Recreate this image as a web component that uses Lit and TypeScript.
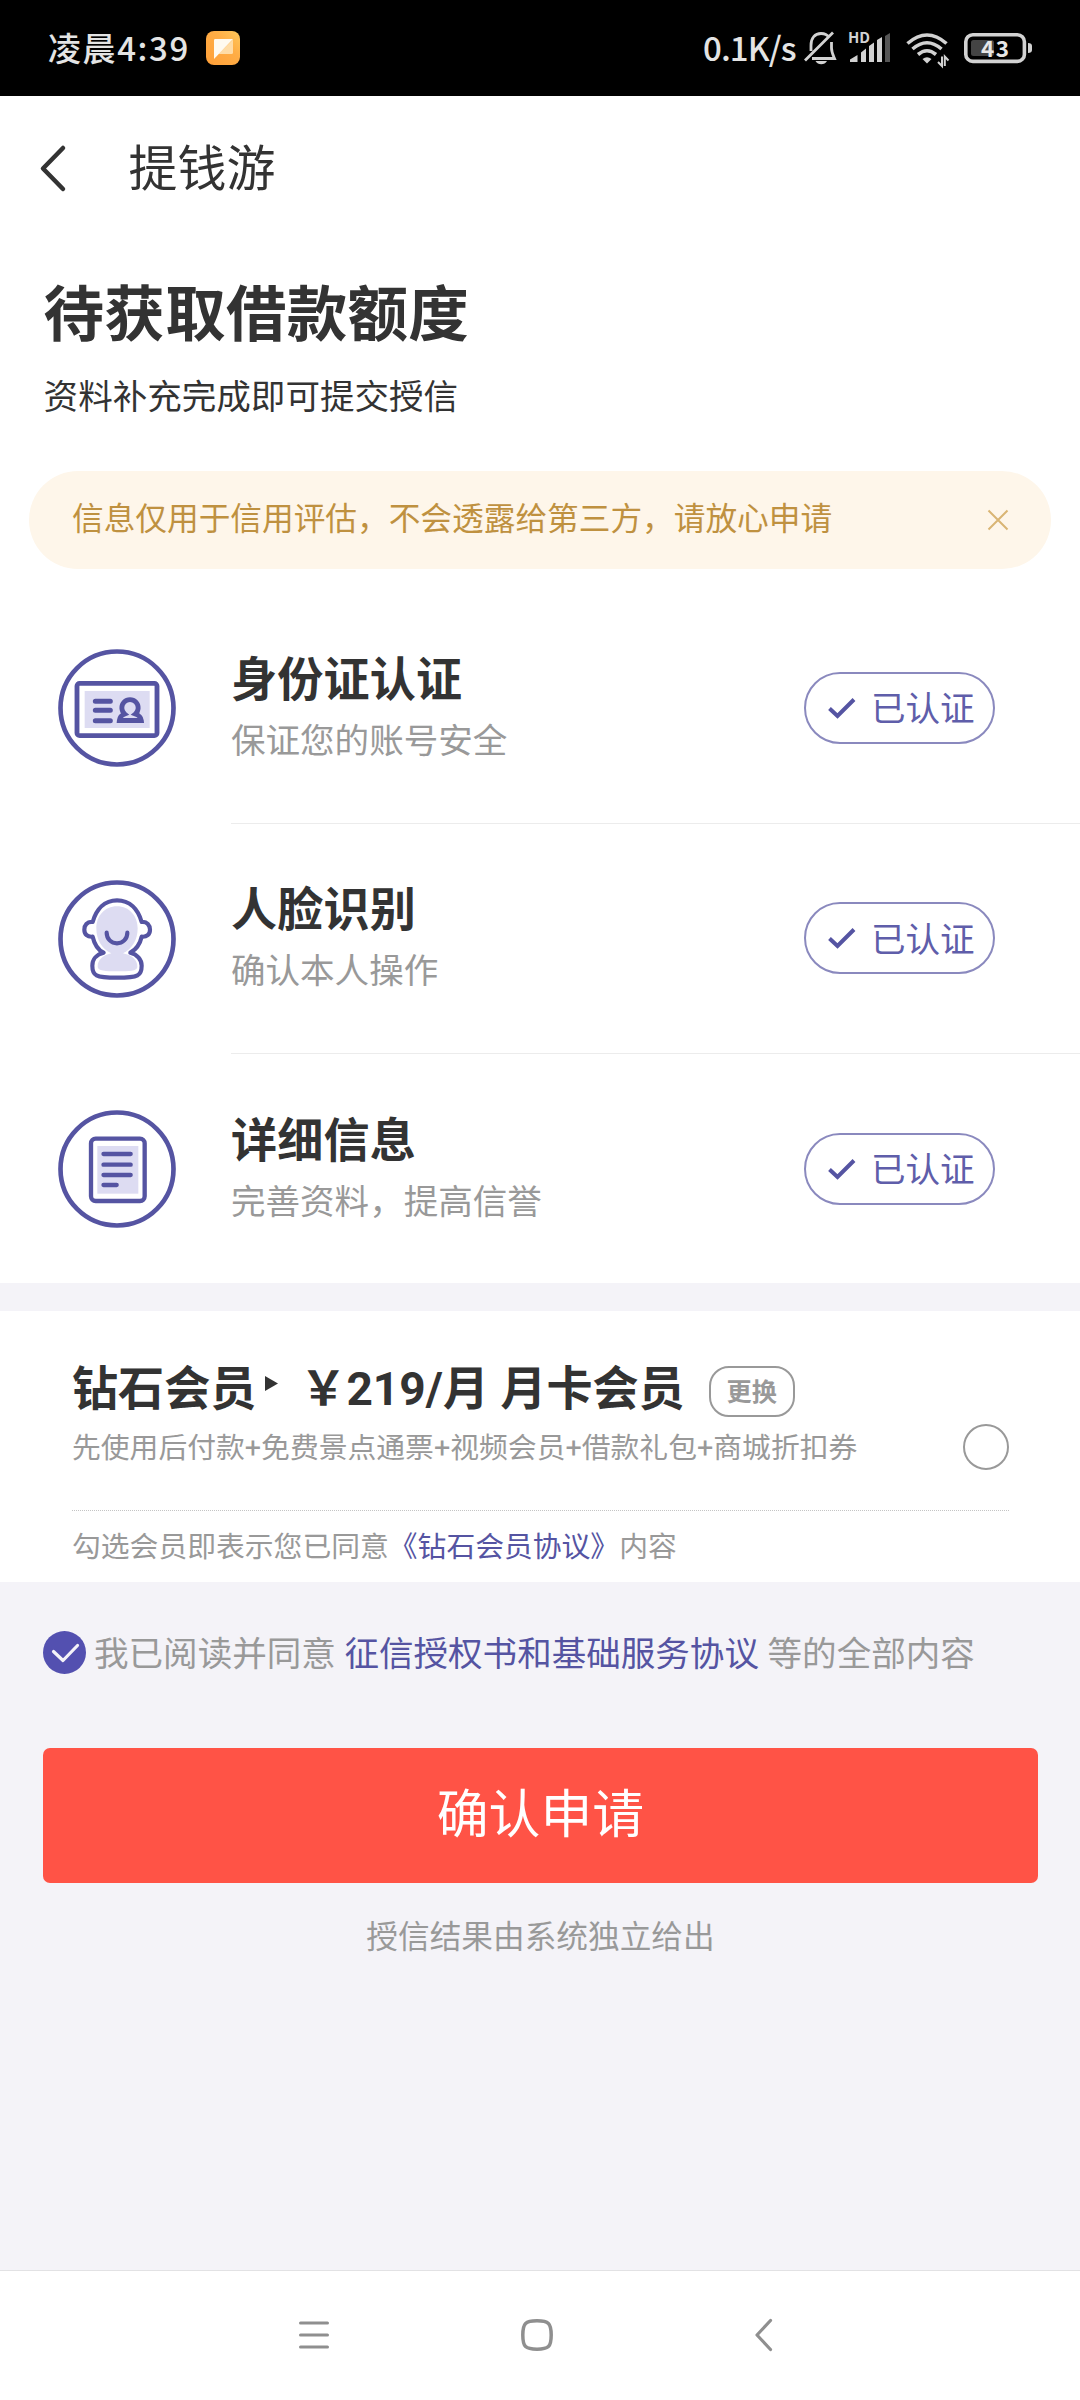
import { LitElement, html, css, svg, TemplateResult } from "lit";
import { customElement, property, state } from "lit/decorators.js";

const CARD_ICON = svg`
  <rect x="57" y="103" width="240" height="157" rx="8" stroke-width="14.5"/>
  <rect class="tint" x="80" y="126" width="195" height="111"/>
  <path stroke-width="15" stroke-linecap="round" d="M112 157H157M112 184H157M112 215H157"/>
  <path class="tint outline" stroke-width="14.5" d="M200 195A24.500 24.500 0 1 1 232 195C243 199 249 205 250 214.500H184C185 205 190 199 200 195Z"/>`;

const FACE_ICON = svg`
  <path class="tint" d="M177 79C214 79 239 108 239 145C239 180 222 207 195 220C225 226 238 242 238 260C238 273 214 274 177 274C142 274 119 272 119 260C119 242 132 226 160 220C132 207 115 180 115 145C115 108 140 79 177 79Z"/>
  <path stroke-width="12.500" stroke-linejoin="round" d="M104 126C87 124 79 136 79 149C79 163 89 172 104 170C109 192 122 211 137 218C115 223 103 239 103 257C103 286 112 293 177 293C242 293 251 286 251 257C251 239 238 223 217 218C233 209 246 192 251 170C266 172 276 163 276 149C276 136 267 124 251 126C240 87 215 61 177 61C140 61 115 87 104 126Z"/>
  <path stroke-width="12.500" stroke-linecap="round" d="M146 158C146 177 160 190 177 190C194 190 208 177 208 158"/>`;

const NOTE_ICON = svg`
  <rect x="99" y="86" width="161" height="187" rx="14" stroke-width="13"/>
  <rect class="tint" x="118" y="108" width="123" height="143"/>
  <path stroke-width="13" stroke-linecap="round" d="M136.500 132H218M136.500 164H218M136.500 195H218M136.500 225H176"/>`;

interface Step {
  icon: TemplateResult;
  title: string;
  note: string;
}

const STEPS: Step[] = [
  { icon: CARD_ICON, title: "身份证认证", note: "保证您的账号安全" },
  { icon: FACE_ICON, title: "人脸识别", note: "确认本人操作" },
  { icon: NOTE_ICON, title: "详细信息", note: "完善资料，提高信誉" },
];

@customElement("status-bar")
class StatusBar extends LitElement {
  static styles = css`
    :host {
      display: flex;
      align-items: center;
      height: 96px;
      box-sizing: border-box;
      padding: 0 47px 0 48px;
      background: #000;
      color: #e4e4e4;
      font: 500 33px/48px "Noto Sans CJK SC", sans-serif;
    }
    svg { display: block; flex: none; }
    .clock { letter-spacing: 1.6px; width: 158px; white-space: nowrap; padding-bottom: 2px; }
    .speed { margin-left: auto; letter-spacing: -0.9px; width: 101px; white-space: nowrap; padding-bottom: 3px; }
  `;
  render() {
    return html`
      <span class="clock">凌晨4:39</span>
      <svg width="34" height="34" viewBox="0 0 34 34">
        <defs>
          <linearGradient id="g" x1="0" y1="1" x2="1" y2="0">
            <stop offset="0" stop-color="#ff9f38"/><stop offset=".6" stop-color="#ffad45"/><stop offset="1" stop-color="#ffc95c"/>
          </linearGradient>
        </defs>
        <rect width="34" height="34" rx="8" fill="url(#g)"/>
        <path d="M27 8.500V21.500a1.500 1.500 0 0 1-1.500 1.500H12.500Z" fill="#ffdca6"/>
        <path d="M8 9.200Q8 8 9.200 8H27L8 28Z" fill="#fffaf0"/>
      </svg>
      <span class="speed">0.1K/s</span>
      <svg width="229" height="64" viewBox="804 16 229 64" fill="none" stroke="#d2d2d2">
        <path stroke-width="2.800" d="M811 51V45.500C811 38 815 33.500 821 33.500C824.500 33.500 827.500 35 829 37.500M831.500 42V48C831.500 52 833 55 834.500 58.500H812M805 60.500L833 32.500"/>
        <path stroke="none" fill="#d2d2d2" d="M815.500 61H827Q825 64.200 821.200 64.200Q817.500 64.200 815.500 61Z"/>
        <g stroke="none" fill="#d2d2d2">
          <text x="848" y="43" font-size="15" font-weight="700" font-family="Noto Sans CJK SC, sans-serif">HD</text>
          <path d="M850 62V59.500L857.500 55V62ZM861 62V52.500L866 48.500V62ZM869 62V46L874 42.500V62ZM877 62V40L882 37V62Z"/>
          <path fill="#555" d="M885 62V36L890 33V62Z"/>
        </g>
        <path stroke-width="3.600" d="M907.500 43.500Q927 26.500 946.500 43.500M912.500 49Q927 36.500 941.500 49M918 54.500Q927 47 936 54.500"/>
        <path stroke="none" fill="#d2d2d2" d="M922.500 59Q927 55.500 931.500 59L927 63.500Z"/>
        <path stroke-width="2" d="M942 56.500V66L938 62M944.800 66V56.500L948.500 60.500"/>
        <rect x="965.800" y="34.800" width="58.600" height="26.600" rx="7" stroke-width="3.600"/>
        <rect x="971" y="40" width="23" height="16" rx="2.500" fill="#444" stroke="none"/>
        <path stroke="none" fill="#d2d2d2" d="M1028 43Q1032 43 1032 46V50Q1032 53 1028 53Z"/>
        <text x="981" y="56.500" stroke="none" fill="#e6e6e6" font-size="22.500" font-weight="700" letter-spacing="1.500" font-family="Noto Sans CJK SC, sans-serif">43</text>
      </svg>`;
  }
}

@customElement("step-row")
class StepRow extends LitElement {
  @property({ attribute: false }) step!: Step;
  static styles = css`
    :host { display: flex; height: 230.4px; padding-left: 57.6px; }
    .icon { flex: none; align-self: center; width: 118px; height: 118px; margin-right: 55.4px; fill: none; stroke: #5554a2; }
    .tint { fill: #dddcf2; stroke: none; }
    .outline { stroke: #5554a2; }
    .body {
      flex: 1; display: flex; align-items: center; justify-content: space-between;
      padding-right: 85px; box-sizing: border-box; border-bottom: 1px solid #ececec;
    }
    :host([last]) .body { border-bottom-color: transparent; }
    .words { display: flex; flex-direction: column; padding-top: 3px; }
    .title { font-size: 46.08px; line-height: 64px; font-weight: 700; color: #333; letter-spacing: 0.2px; }
    .note { font-size: 34.56px; line-height: 59px; color: #999; }
    .badge {
      display: flex; align-items: center; box-sizing: border-box; width: 191px; height: 72px;
      padding-left: 21.5px; border: 2px solid #8a89be; border-radius: 36px;
      font-size: 34.56px; line-height: 40px; color: #5f5eaa;
    }
    .tick { width: 28px; height: 24px; margin-right: 15.5px; }
    .label { padding-top: 3px; white-space: nowrap; }
  `;
  render() {
    return html`
      <svg class="icon" viewBox="0 0 354 354"><circle cx="177" cy="177" r="169.500" stroke-width="14"/>${this.step.icon}</svg>
      <div class="body">
        <div class="words"><span class="title">${this.step.title}</span><span class="note">${this.step.note}</span></div>
        <div class="badge">
          <svg class="tick" viewBox="0 0 28 24" fill="none" stroke="#5554a2" stroke-width="4"><path d="M1.500 12.500L9.500 20L26 3.500"/></svg>
          <span class="label">已认证</span>
        </div>
      </div>`;
  }
}

@customElement("app-root")
class AppRoot extends LitElement {
  @state() private member = false;
  static styles = css`
    :host {
      display: flex; flex-direction: column; width: 1080px; height: 2400px; overflow: hidden;
      background: #f4f3f8; color: #333; font-family: Roboto, "Noto Sans CJK SC", sans-serif;
    }
    svg { display: block; flex: none; }
    .top { background: #fff; height: 1187px; flex: none; }
    .header { display: flex; align-items: center; height: 149px; padding: 0 0 4px 38px; box-sizing: border-box; }
    .name { margin-left: 60.5px; font-size: 48.96px; line-height: 60px; padding-top: 2px; }
    .intro { padding-left: 43.6px; height: 226px; box-sizing: border-box; padding-top: 31px; }
    .headline { font-size: 60.48px; line-height: 80px; font-weight: 700; letter-spacing: 0.3px; }
    .hint { font-size: 34.56px; line-height: 60px; margin-top: 11px; }
    .notice {
      display: flex; align-items: center; justify-content: space-between; box-sizing: border-box;
      height: 98px; margin: 0 28.8px; padding: 0 41px 0 43.2px; border-radius: 49px;
      background: #fef6ea; color: #bf9140; font-size: 31.68px; line-height: 44px;
    }
    .steps { padding-top: 24.3px; }
    .member { background: #fff; margin-top: 28px; height: 271px; flex: none; padding: 0 71px 0 72px; box-sizing: border-box; }
    .plan { display: flex; height: 200px; box-sizing: border-box; justify-content: space-between; border-bottom: 1px dotted #c4c4c4; }
    .offer { padding-top: 46px; }
    .line { display: flex; align-items: center; height: 64px; white-space: pre; font-size: 46.08px; font-weight: 700; line-height: 64px; }
    .arrow { margin: -11px 22.5px 0 8.5px; }
    .change {
      box-sizing: border-box; width: 86px; height: 51px; margin: 5px 0 0 24px; border: 2px solid #999;
      border-radius: 20px; color: #999; font-size: 25.2px; line-height: 50px; text-align: center;
    }
    .perks { font-size: 28.8px; line-height: 40px; color: #999; margin-top: 7px; white-space: nowrap; }
    .radio { box-sizing: border-box; width: 46px; height: 46px; margin-top: 113px; border: 2px solid #999; border-radius: 50%; }
    .terms { font-size: 28.8px; line-height: 40px; color: #999; padding-top: 16px; }
    .link { color: #5554a2; }
    .agree { display: flex; align-items: center; height: 60px; margin: 40px 0 0 43px; font-size: 34.56px; line-height: 60px; color: #999; }
    .agree-text { margin-left: 8px; padding-top: 3px; white-space: pre; }
    .submit {
      flex: none; height: 135px; margin: 66px 42.4px 0 43.2px; border-radius: 7px; background: #ff5346; color: #fff;
      font-size: 51.84px; line-height: 135px; text-align: center;
    }
    .result { margin-top: 33px; padding-left: 1px; font-size: 31.68px; line-height: 44px; color: #999; text-align: center; }
    .nav {
      display: flex; align-items: center; box-sizing: border-box; height: 130px; margin-top: auto;
      padding: 0 0 2px 298px; background: #fff; border-top: 1px solid #e2e2e4;
    }
    .home { margin: 0 202px 0 191px; }
  `;
  render() {
    return html`
      <status-bar></status-bar>
      <div class="top">
        <div class="header">
          <svg width="30" height="50" viewBox="0 0 30 50" fill="none" stroke="#333" stroke-width="4.500" stroke-linecap="round" stroke-linejoin="round"><path d="M25 4L5 24.500L25 45"/></svg>
          <span class="name">提钱游</span>
        </div>
        <div class="intro">
          <div class="headline">待获取借款额度</div>
          <div class="hint">资料补充完成即可提交授信</div>
        </div>
        <div class="notice">
          <span>信息仅用于信用评估，不会透露给第三方，请放心申请</span>
          <svg width="24" height="24" viewBox="0 0 24 24" fill="none" stroke="#d9b574" stroke-width="2"><path d="M2.500 2.500L21.500 21.500M21.500 2.500L2.500 21.500"/></svg>
        </div>
        <div class="steps">
          ${STEPS.map((s, i) => html`<step-row .step=${s} ?last=${i === STEPS.length - 1}></step-row>`)}
        </div>
      </div>
      <div class="member">
        <div class="plan">
          <div class="offer">
            <div class="line"><span>钻石会员</span><svg class="arrow" width="13" height="15" viewBox="0 0 13 15"><path d="M0 0L13 7.500L0 15Z" fill="#333"/></svg><span>￥219/月 月卡会员</span><span class="change">更换</span></div>
            <div class="perks">先使用后付款+免费景点通票+视频会员+借款礼包+商城折扣券</div>
          </div>
          <div class="radio" role="radio" aria-checked=${this.member} @click=${() => (this.member = !this.member)}></div>
        </div>
        <div class="terms">勾选会员即表示您已同意<span class="link">《钻石会员协议》</span>内容</div>
      </div>
      <div class="agree">
        <svg width="43" height="43" viewBox="0 0 43 43"><circle cx="21.500" cy="21.500" r="21.500" fill="#5350b0"/><path d="M10.500 20.500L20 29.500L34.500 14.500" fill="none" stroke="#f4f3f8" stroke-width="3.200" stroke-linecap="round" stroke-linejoin="round"/></svg>
        <span class="agree-text">我已阅读并同意 <span class="link">征信授权书和基础服务协议</span> 等的全部内容</span>
      </div>
      <div class="submit">确认申请</div>
      <div class="result">授信结果由系统独立给出</div>
      <div class="nav">
        <svg width="32" height="34" viewBox="0 0 32 34" stroke="#8f8f8f" stroke-width="3" stroke-linecap="round"><path d="M2.500 5H29.500M2.500 17H29.500M2.500 29H29.500"/></svg>
        <svg class="home" width="32" height="32" viewBox="0 0 32 32" fill="none" stroke="#8f8f8f" stroke-width="3.500"><path d="M16 1.800C27.500 1.800 30.200 4 30.200 16S27.500 30.200 16 30.200S1.800 28 1.800 16S4.500 1.800 16 1.800Z"/></svg>
        <svg width="18" height="34" viewBox="0 0 18 34" fill="none" stroke="#8f8f8f" stroke-width="3.200" stroke-linecap="round" stroke-linejoin="round"><path d="M15.500 2.500L2 17L15.500 31.500"/></svg>
      </div>`;
  }
}
